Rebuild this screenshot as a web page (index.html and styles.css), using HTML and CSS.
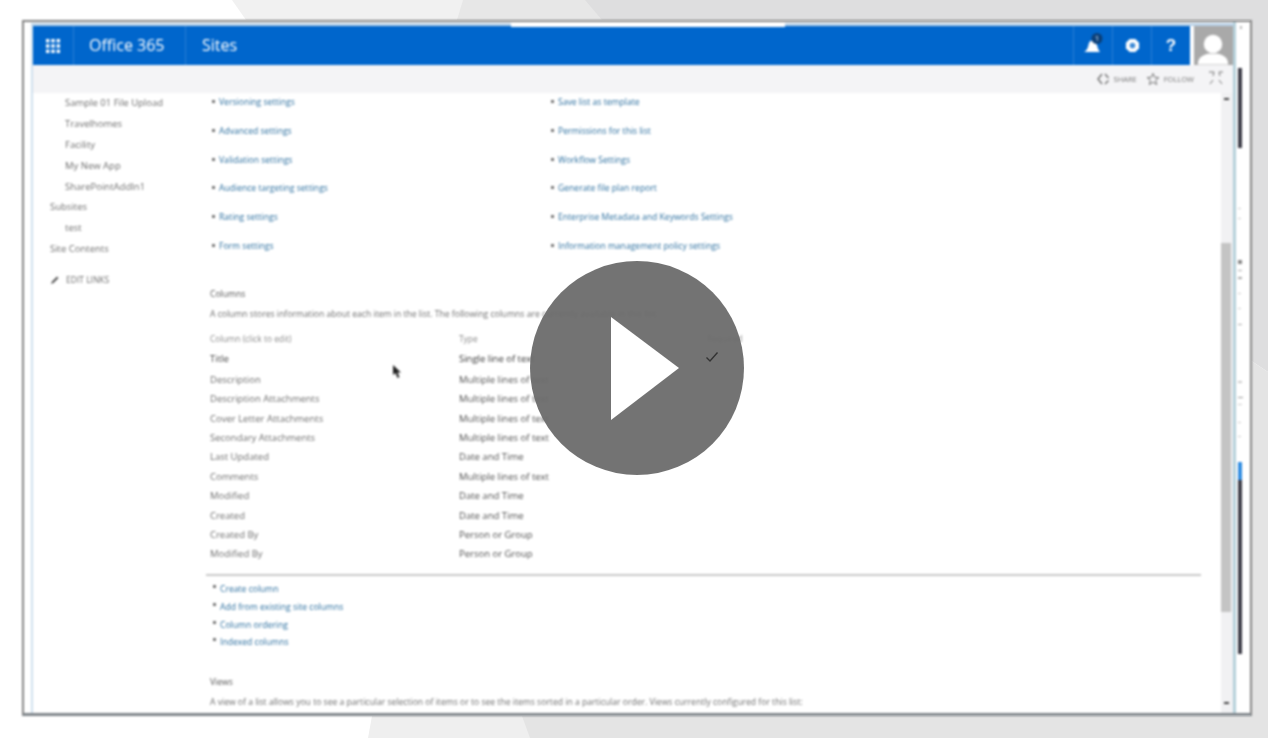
FILE: index.html
```html
<!DOCTYPE html>
<html lang="en">
<head>
    <meta charset="UTF-8">
    <meta name="viewport" content="width=device-width, initial-scale=1.0">
    <title>Office 365 - List Settings</title>
    <link rel="stylesheet" href="styles.css">
</head>
<body>

    <!-- Background shapes -->
    <svg class="backdrop" viewBox="0 0 1268 738" aria-hidden="true">
        <rect width="1268" height="738" fill="#ffffff"/>
        <polygon points="232,0 600,0 600,20 246,20" fill="#f1f1f1"/>
        <polygon points="463,0 1268,0 1268,20 457,20" fill="#e7e7e7"/>
        <polygon points="585,0 1268,0 1268,372 1250,360 1250,20 602,20" fill="#dededf"/>
        <polygon points="1250,360 1268,372 1268,738 1250,738" fill="#e4e4e4"/>
        <polygon points="372,716 1252,716 1252,738 368,738" fill="#efefef"/>
        <polygon points="522,716 1252,716 1252,738 530,738" fill="#e4e4e4"/>
    </svg>

    <div class="frame">
        <div class="app">
            <header class="suite">
                <div class="suite-bar">
                    <div class="waffle-cell">
                        <svg class="waffle" viewBox="0 0 14 14" aria-hidden="true">
                            <g fill="#ffffff">
                                <rect x="0" y="0" width="3.4" height="3.4"/><rect x="5.3" y="0" width="3.4" height="3.4"/><rect x="10.6" y="0" width="3.4" height="3.4"/>
                                <rect x="0" y="5.3" width="3.4" height="3.4"/><rect x="5.3" y="5.3" width="3.4" height="3.4"/><rect x="10.6" y="5.3" width="3.4" height="3.4"/>
                                <rect x="0" y="10.6" width="3.4" height="3.4"/><rect x="5.3" y="10.6" width="3.4" height="3.4"/><rect x="10.6" y="10.6" width="3.4" height="3.4"/>
                            </g>
                        </svg>
                    </div>
                    <div class="brand-cell">Office 365</div>
                    <div class="app-cell">Sites</div>
                    <div class="icon-cell">
                        <svg class="bell" viewBox="0 0 24 24" aria-hidden="true">
                            <path d="M1 20 C5 18 5 14 6 11 C7 8 10 8 12 9 C14 11 14 16 17 20 Z" fill="#ffffff"/>
                            <circle cx="14" cy="6.5" r="5.5" fill="#0b3f78"/>
                            <text x="14" y="9" class="bell-count">1</text>
                        </svg>
                    </div>
                    <div class="icon-cell">
                        <svg class="gear" viewBox="0 0 16 16" aria-hidden="true">
                            <polygon points="5,1 11,1 15,5 15,11 11,15 5,15 1,11 1,5" fill="#ffffff"/>
                            <circle cx="8" cy="8" r="3" fill="#3d8ad6"/>
                        </svg>
                    </div>
                    <div class="icon-cell help">?</div>
                </div>
                <div class="avatar">
                    <svg viewBox="0 0 40 39" aria-hidden="true">
                        <circle cx="19.5" cy="18" r="9.5" fill="#ffffff"/>
                        <path d="M4 39 C4 32 8 30 14 28 L25 28 C31 30 35 32 35 39 Z" fill="#ffffff"/>
                    </svg>
                </div>
            </header>

            <div class="ribbon">
                <svg class="ribbon-icon" viewBox="0 0 14 14" aria-hidden="true">
                    <path d="M6 2 L2 7 L6 12 M9 2 L12.5 6 M9 12 L12.5 8.5" fill="none" stroke="#777" stroke-width="1.5"/>
                </svg>
                <span class="ribbon-label">SHARE</span>
                <svg class="ribbon-icon star" viewBox="0 0 14 14" aria-hidden="true">
                    <polygon points="7,1.5 8.7,5.3 12.8,5.6 9.6,8.3 10.7,12.5 7,10.2 3.3,12.5 4.4,8.3 1.2,5.6 5.3,5.3" fill="none" stroke="#777"/>
                </svg>
                <span class="ribbon-label">FOLLOW</span>
                <svg class="ribbon-icon focus" viewBox="0 0 16 14" aria-hidden="true">
                    <path d="M1 1 H6 L5 5 M15 1 H11 L12 5 M2 13 L5 9 M14 13 L11 9" fill="none" stroke="#777"/>
                </svg>
            </div>

            <div class="page">
                <nav class="side-nav">
                    <a class="nav-sub">Sample 01 File Upload</a>
                    <a class="nav-sub">Travelhomes</a>
                    <a class="nav-sub">Facility</a>
                    <a class="nav-sub">My New App</a>
                    <a class="nav-sub">SharePointAddIn1</a>
                    <a>Subsites</a>
                    <a class="nav-sub">test</a>
                    <a>Site Contents</a>
                    <a class="edit-links">
                        <svg viewBox="0 0 10 10" aria-hidden="true"><path d="M1 9 L2 6.5 L7 1.5 L8.5 3 L3.5 8 Z" fill="#555"/></svg>
                        EDIT LINKS
                    </a>
                </nav>

                <main class="content">
                    <div class="settings-grid">
                        <a class="link">Versioning settings</a>
                        <a class="link">Save list as template</a>
                        <a class="link">Advanced settings</a>
                        <a class="link">Permissions for this list</a>
                        <a class="link">Validation settings</a>
                        <a class="link">Workflow Settings</a>
                        <a class="link">Audience targeting settings</a>
                        <a class="link">Generate file plan report</a>
                        <a class="link">Rating settings</a>
                        <a class="link">Enterprise Metadata and Keywords Settings</a>
                        <a class="link">Form settings</a>
                        <a class="link">Information management policy settings</a>
                    </div>

                    <h2 class="section-title columns-title">Columns</h2>
                    <p class="section-text">A column stores information about each item in the list. The following columns are currently available in this list:</p>

                    <div class="columns-table">
                        <div class="table-row table-head"><span>Column (click to edit)</span><span>Type</span><span>Required</span></div>
                        <div class="table-row title-row"><span>Title</span><span>Single line of text</span><span></span></div>
                        <div class="table-row"><span>Description</span><span>Multiple lines of text</span><span></span></div>
                        <div class="table-row"><span>Description Attachments</span><span>Multiple lines of text</span><span></span></div>
                        <div class="table-row"><span>Cover Letter Attachments</span><span>Multiple lines of text</span><span></span></div>
                        <div class="table-row"><span>Secondary Attachments</span><span>Multiple lines of text</span><span></span></div>
                        <div class="table-row"><span>Last Updated</span><span>Date and Time</span><span></span></div>
                        <div class="table-row"><span>Comments</span><span>Multiple lines of text</span><span></span></div>
                        <div class="table-row"><span>Modified</span><span>Date and Time</span><span></span></div>
                        <div class="table-row"><span>Created</span><span>Date and Time</span><span></span></div>
                        <div class="table-row"><span>Created By</span><span>Person or Group</span><span></span></div>
                        <div class="table-row"><span>Modified By</span><span>Person or Group</span><span></span></div>
                    </div>

                    <hr class="rule">

                    <div class="column-links">
                        <a class="link">Create column</a>
                        <a class="link">Add from existing site columns</a>
                        <a class="link">Column ordering</a>
                        <a class="link">Indexed columns</a>
                    </div>

                    <h2 class="section-title views-title">Views</h2>
                    <p class="section-text">A view of a list allows you to see a particular selection of items or to see the items sorted in a particular order. Views currently configured for this list:</p>

                    <svg class="pointer" viewBox="0 0 10 14" aria-hidden="true">
                        <path d="M1 0 L1 10 L3.5 8 L5.5 13 L7.5 12 L5.5 7.5 L9 7.5 Z" fill="#222"/>
                    </svg>
                </main>

                <div class="scrollbar">
                    <span class="scroll-arrow"></span>
                    <span class="scroll-thumb"></span>
                    <span class="scroll-arrow"></span>
                </div>
            </div>
        </div>

        <!-- Thin outer strip on the right of the recording -->
        <aside class="rail">
            <span class="rail-mark"></span>
            <span class="rail-bar"></span>
            <svg class="rail-ticks" viewBox="0 0 13 240" aria-hidden="true">
                <g fill="#cccccc">
                    <rect x="2" y="0" width="3" height="1"/><rect x="2" y="10" width="3" height="1"/>
                    <rect x="2" y="52" width="4" height="4" fill="#888"/><rect x="2" y="62" width="4" height="1" fill="#aaa"/>
                    <rect x="2" y="69" width="4" height="2" fill="#aaa"/><rect x="2" y="85" width="3" height="1"/>
                    <rect x="2" y="100" width="3" height="1"/><rect x="2" y="116" width="4" height="1" fill="#aaa"/>
                    <rect x="2" y="173" width="4" height="2"/><rect x="2" y="189" width="5" height="1" fill="#999"/>
                    <rect x="2" y="196" width="4" height="1"/><rect x="2" y="214" width="3" height="1"/>
                    <rect x="2" y="228" width="3" height="1"/>
                </g>
            </svg>
            <span class="rail-track"></span>
        </aside>

        <span class="top-pill"></span>
    </div>

    <!-- Video play button -->
    <div class="play">
        <svg class="play-arrow" viewBox="0 0 68 103" aria-hidden="true"><polygon points="0,0 68,51 0,103" fill="#ffffff"/></svg>
        <svg class="play-check" viewBox="0 0 14 12" aria-hidden="true"><path d="M1.5 6.5 L5 10 L12.5 1.5" fill="none" stroke="#333" stroke-width="1.4"/></svg>
    </div>

</body>
</html>
```

FILE: styles.css
```css
/* Base */
body {
    margin: 0;
    width: 1268px;
    height: 738px;
    overflow: hidden;
    position: relative;
    font-family: "Open Sans", "Liberation Sans", sans-serif;
    font-size: 9.5px;
    color: #6e6e6e;
    background-color: #fff;
}

a {
    display: block;
}

.backdrop {
    position: absolute;
    top: 0;
    left: 0;
    width: 1268px;
    height: 738px;
}

/* Recording frame */
.frame {
    position: relative;
    box-sizing: border-box;
    width: 1230px;
    height: 696px;
    margin: 20px 0 0 22px;
    display: flex;
    background-color: #fff;
    border: 2px solid #858585;
    border-bottom: 3px solid #7f858a;
    filter: blur(0.9px);
}

.app {
    flex: 1;
    min-width: 0;
    display: flex;
    flex-direction: column;
    margin: 1px 0 0 7px;
    border-top: 3px solid #bcd3e8;
    border-left: 2px solid #cfe0ee;
    overflow: hidden;
}

.top-pill {
    position: absolute;
    top: 1px;
    left: 487px;
    width: 274px;
    height: 4px;
    background-color: #fff;
}

/* Blue suite bar */
.suite {
    display: flex;
    height: 39px;
    flex-shrink: 0;
    gap: 4px;
}

.suite-bar {
    flex: 1;
    display: flex;
    align-items: stretch;
    background-color: #0066cc;
    color: #fff;
    font-size: 16px;
}

.waffle-cell {
    width: 40px;
    display: flex;
    align-items: center;
    justify-content: center;
    border-right: 1px solid #2a7fd4;
}

.waffle {
    width: 14px;
    height: 14px;
}

.brand-cell {
    width: 96px;
    padding-left: 15px;
    line-height: 39px;
    border-right: 1px solid #2a7fd4;
}

.app-cell {
    flex: 1;
    padding-left: 16px;
    line-height: 39px;
}

.icon-cell {
    width: 38px;
    display: flex;
    align-items: center;
    justify-content: center;
    border-left: 1px solid #2a7fd4;
}

.bell {
    width: 24px;
    height: 24px;
    margin: -4px 0 0 4px;
}

.bell-count {
    font-size: 8px;
    fill: #d7e6f5;
    text-anchor: middle;
}

.gear {
    width: 15px;
    height: 15px;
}

.help {
    font-family: "Liberation Sans", sans-serif;
    font-weight: bold;
    font-size: 17px;
}

.avatar {
    width: 39px;
    background-color: #a9a9a9;
}

.avatar svg {
    display: block;
    width: 39px;
    height: 39px;
}

/* Share / follow strip */
.ribbon {
    height: 28px;
    flex-shrink: 0;
    display: flex;
    align-items: center;
    justify-content: flex-end;
    padding-right: 9px;
    background-color: #f4f4f6;
}

.ribbon-icon {
    width: 14px;
    height: 14px;
}

.ribbon-label {
    margin-left: 4px;
    font-size: 7.5px;
    color: #777;
}

.star {
    margin-left: 9px;
}

.focus {
    width: 16px;
    margin-left: 14px;
    margin-top: -2px;
}

/* Page under the ribbon */
.page {
    flex: 1;
    min-height: 0;
    display: flex;
    background-color: #fff;
}

.side-nav {
    width: 173px;
    flex-shrink: 0;
    box-sizing: border-box;
    padding: 3px 0 0 17px;
    display: flex;
    flex-direction: column;
    gap: 6.9px;
    line-height: 14px;
}

.nav-sub {
    padding-left: 15px;
}

.edit-links {
    display: flex;
    align-items: center;
    gap: 6px;
    margin-top: 10px;
    font-size: 8.5px;
}

.edit-links svg {
    width: 10px;
    height: 10px;
}

.content {
    position: relative;
    flex: 1;
    min-width: 0;
    padding: 2px 0 0 4px;
}

.link {
    position: relative;
    padding-left: 9px;
    font-size: 8.6px;
    color: #2c6f9f;
}

.link::before {
    content: "";
    position: absolute;
    left: 2px;
    top: 5px;
    width: 3px;
    height: 3px;
    background-color: #777;
}

.settings-grid {
    display: grid;
    grid-template-columns: 339px 1fr;
    row-gap: 14.8px;
    line-height: 14px;
}

.section-title {
    margin: 0;
    font-size: 8.6px;
    font-weight: normal;
    line-height: 14px;
    color: #555;
}

.columns-title {
    margin-top: 34px;
}

.section-text {
    margin: 6px 0 0;
    font-size: 8.6px;
    line-height: 14px;
    color: #6e6e6e;
}

.columns-table {
    margin-top: 8.3px;
}

.table-row {
    display: grid;
    grid-template-columns: 249px 248px 1fr;
    line-height: 19.4px;
}

.table-row span:nth-child(2) {
    color: #505050;
}

.table-head {
    font-size: 8.4px;
    color: #8a8a8a;
}

.table-head span:nth-child(2) {
    color: #8a8a8a;
}

.title-row {
    padding-bottom: 1.6px;
    color: #444;
}

.title-row span:nth-child(2) {
    color: #333;
}

.rule {
    margin: 10px 20px 0 -4px;
    border: 0;
    height: 2px;
    background-color: #c8c8c8;
}

.column-links {
    margin-top: 5.4px;
    line-height: 17.7px;
}

.column-links .link {
    padding-left: 10px;
}

.column-links .link::before {
    left: 3px;
    top: 4px;
}

.views-title {
    margin-top: 23px;
}

.pointer {
    position: absolute;
    left: 186px;
    top: 272px;
    width: 10px;
    height: 14px;
}

/* Page scrollbar */
.scrollbar {
    width: 12px;
    flex-shrink: 0;
    display: flex;
    flex-direction: column;
    align-items: stretch;
    background-color: #f1f1f3;
}

.scroll-arrow {
    height: 2px;
    width: 5px;
    margin: 5px 0 0 3px;
    background-color: #444;
}

.scroll-thumb {
    height: 369px;
    margin: 143px 2px 0 0;
    background-color: #c4c4c4;
}

.scroll-thumb + .scroll-arrow {
    margin-top: 90px;
}

/* Outer strip */
.rail {
    width: 14px;
    flex-shrink: 0;
    display: flex;
    flex-direction: column;
    border-left: 3px solid #b5d0da;
}

.rail-mark {
    width: 2px;
    height: 3px;
    margin: 4px 0 0 4px;
    background-color: #bbb;
}

.rail-bar {
    width: 4px;
    height: 80px;
    margin: 39px 0 0 2px;
    background-color: #3d3d48;
}

.rail-ticks {
    display: block;
    width: 13px;
    height: 240px;
    margin-top: 60px;
}

.rail-track {
    width: 4px;
    height: 192px;
    margin: 14px 0 0 2px;
    background: linear-gradient(#2f8be0 18px, #3d3d48 18px);
}

/* Play button */
.play {
    position: absolute;
    top: 261px;
    left: 530px;
    width: 214px;
    height: 214px;
    border-radius: 50%;
    background-color: rgba(108, 108, 108, 0.95);
}

.play-arrow {
    position: absolute;
    left: 81px;
    top: 56px;
    width: 68px;
    height: 103px;
}

.play-check {
    position: absolute;
    left: 175px;
    top: 90px;
    width: 14px;
    height: 12px;
}
```
